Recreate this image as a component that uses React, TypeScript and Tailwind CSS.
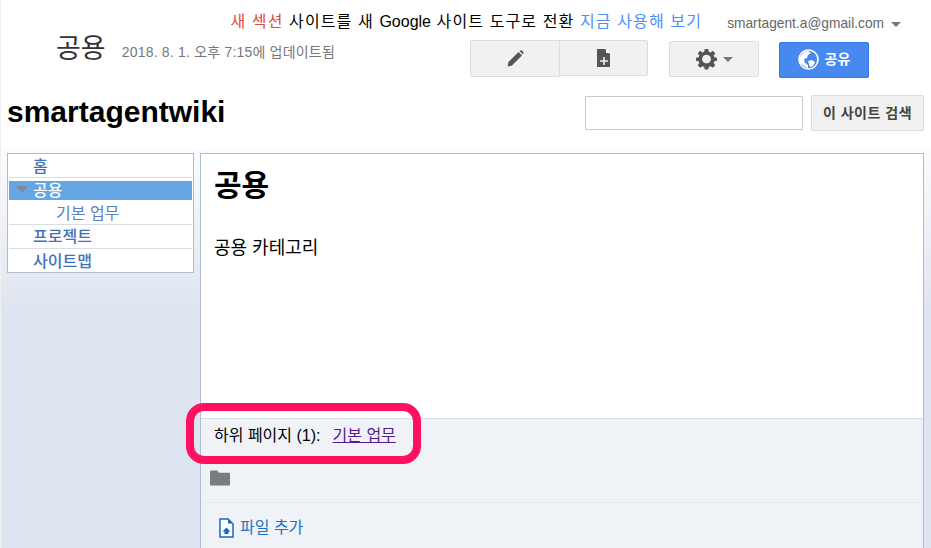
export default function App() {
  const font = { fontFamily: '"Liberation Sans","Noto Sans CJK KR",sans-serif' };
  return (
    <div style={font} className="w-[931px] h-[548px] overflow-hidden bg-white flex flex-col text-black border-l border-[#f0f0f0]">
      <div className="h-[87px] flex shrink-0">
        <div className="w-[469px] pl-[55px] pt-[31px] flex items-start">
          <span className="text-[27px] leading-[36px] text-[#333]">공용</span>
          <span className="ml-[16px] mt-[12px] text-[14px] leading-[18px] tracking-[0.2px] text-[#777] whitespace-nowrap">2018. 8. 1. 오후 7:15에 업데이트됨</span>
        </div>
        <div className="flex-1 relative">
          <div className="absolute right-[229px] top-[12px] text-[16px] leading-[20px] tracking-[1.12px] whitespace-nowrap">
            <span className="text-[#dd4b39]">새 섹션</span> 사이트를 새 <span className="tracking-normal">Google</span> 사이트 도구로 전환 <span className="text-[#4d90fe]">지금 사용해 보기</span>
          </div>
          <div className="absolute right-[30px] top-[15px] flex items-center text-[13.75px] leading-[18px] text-[#666] whitespace-nowrap">
            smartagent.a@gmail.com
            <span className="ml-[7px] w-0 h-0 border-x-[5px] border-x-transparent border-t-[5px] border-t-[#777]" />
          </div>
          <div className="pt-[40px] flex items-start">
            <div className="flex">
              <button className="w-[90px] h-[37px] flex items-center justify-center bg-[#f1f1f1] border border-[#dcdcdc] rounded-l-[2px]">
                <svg width="17" height="17" viewBox="0 0 17 17"><path d="M0.500 16.500L1.500 12 11.500 2 15 5.500 5 15.500z" fill="#555" /><path d="M12.500 1Q14 -0.300 15.500 1T16 4.500z" fill="#555" /></svg>
              </button>
              <button className="w-[89px] h-[36px] -ml-px flex items-center justify-center bg-[#f1f1f1] border border-[#dcdcdc] rounded-r-[2px]">
                <svg width="14" height="18" viewBox="0 0 14 18"><path d="M0 0h8l5 5v13H0z" fill="#555" /><path d="M9 0l4 4H9z" fill="#fff" /><path d="M7 8v8M3 12h8" stroke="#f1f1f1" strokeWidth="1.6" /></svg>
              </button>
            </div>
            <button className="ml-[21px] mt-px w-[90px] h-[36px] flex items-center justify-center gap-[6px] pl-px bg-[#f1f1f1] border border-[#dcdcdc] rounded-[2px]">
              <svg width="21" height="22" viewBox="0 0 24 24" fill="#555"><path fillRule="evenodd" d="M10 0.500h4l.6 3.200 2 .8L19.300 2.700l2.800 2.800L20.200 8.100l.8 2L24 10.500v3.500l-3 .6-.8 2 1.800 2.600-2.800 2.800-2.600-1.800-2 .8L14 24h-4l-.6-3-2-.8-2.600 1.800L2 19.200l1.800-2.600-.8-2L0 14v-3.500l3-.4.8-2L2 5.500l2.800-2.800L7.400 4.500l2-.8zM12 7a5 5 0 1 0 .01 0z" /></svg>
              <span className="w-0 h-0 border-x-[5px] border-x-transparent border-t-[5px] border-t-[#777]" />
            </button>
            <button className="ml-[20px] mt-[1.500px] w-[90px] h-[36px] flex items-center justify-center gap-[6px] bg-[#4889f0] border border-[#3079ed] rounded-[2px] text-white text-[14px] font-bold">
              <svg width="21" height="21" viewBox="0 0 21 21"><circle cx="10.500" cy="10.500" r="9.500" fill="#4889f0" stroke="#fff" strokeWidth="1.600" /><path d="M2 8l4-5 4-1 3 2-3 2-1 3-3 1 1 4 3 2v3l-3-1-5-4zM10 12l4-1 3 2-2 4-3 1-1-3z" fill="#fff" /></svg>
              공유
            </button>
          </div>
        </div>
      </div>
      <div className="h-[61px] shrink-0 flex items-start pl-[6px]">
        <div className="text-[30px] leading-[38px] mt-[6px] font-bold flex-1">smartagentwiki</div>
        <input className="mt-[9px] w-[218px] h-[34px] bg-white border border-[#c8c8c8] rounded-[1px]" />
        <button className="ml-[8px] mt-[8px] mr-[7px] w-[113px] h-[36px] bg-[#f1f1f1] border border-[#dcdcdc] rounded-[2px] text-[14px] tracking-[0.5px] font-bold text-[#444]">이 사이트 검색</button>
      </div>
      <div className="flex-1 flex items-stretch bg-gradient-to-b from-[#fbfcfd] to-[#dfe5f0] bg-[length:100%_160px] bg-no-repeat pl-[6px] pt-[5px]" style={{ backgroundColor: '#dfe5f0' }}>
        <div className="w-[187px] h-[120px] bg-white border border-[#aebdd2] shrink-0 px-px text-[16px] text-[#3f73b8] font-medium">
          <div className="h-[24px] leading-[25px] pl-[24px] border-b border-[#d8dee8]">홈</div>
          <div className="mt-[3px] h-[19px] leading-[18px] flex items-center bg-[#66a5e4] text-white">
            <span className="ml-[7px] w-0 h-0 border-x-[6px] border-x-transparent border-t-[7px] border-t-[#7c8a99] mb-[3px]" />
            <span className="ml-[5px]">공용</span>
          </div>
          <div className="h-[25px] leading-[28px] pl-[47px] font-normal text-[#5a80c4] border-b border-[#d8dee8]">기본 업무</div>
          <div className="h-[24px] leading-[24px] pl-[24px] border-b border-[#d8dee8]">프로젝트</div>
          <div className="h-[24px] leading-[25px] pl-[24px]">사이트맵</div>
        </div>
        <div className="ml-[6px] w-[724px] bg-white border-l border-t border-r border-[#aebdd2] flex flex-col">
          <div className="h-[264px] shrink-0 px-[13px]">
            <h1 className="text-[30px] leading-[36px] mt-[14px] font-bold">공용</h1>
            <p className="mt-[32px] text-[18px] leading-[24px]">공용 카테고리</p>
          </div>
          <div className="flex-1 bg-[#eff3f8] border-t border-[#d4dce6] relative">
            <div className="h-[84px] border-b border-[#e6e9ee] pl-[13px] pt-[6px] text-[16px] leading-[22px]">
              <div>
                하위 페이지 (1):<a className="ml-[12px] text-[#551a8b] underline">기본 업무</a>
              </div>
              <svg className="mt-[23px] ml-[-4px]" width="20" height="16" viewBox="0 0 21 16"><path d="M0 1.500Q0 0 1.500 0h6l2 2.500H20Q21 2.500 21 3.500V15q0 1-1 1H1q-1 0-1-1z" fill="#7a7a80" /></svg>
            </div>
            <div className="pl-[18px] pt-[15px] flex items-center text-[16px] leading-[20px] text-[#1a73c8]">
              <svg width="15" height="20" viewBox="0 0 15 20"><path d="M1 1h8l5 5v13H1z" fill="#fff" stroke="#1a66c4" strokeWidth="1.500" /><path d="M9 0.500l5 5H9z" fill="#1a66c4" /><path d="M7.500 9.500l4 4H9.500v2.500h-4v-2.500h-2z" fill="#1a66c4" /></svg>
              <span className="ml-[6px]">파일 추가</span>
            </div>
            <div className="absolute left-[-15px] top-[-16px] w-[235px] h-[61px] rounded-[18px] border-[8px] border-[#ff1160]" />
          </div>
        </div>
      </div>
    </div>
  );
}
